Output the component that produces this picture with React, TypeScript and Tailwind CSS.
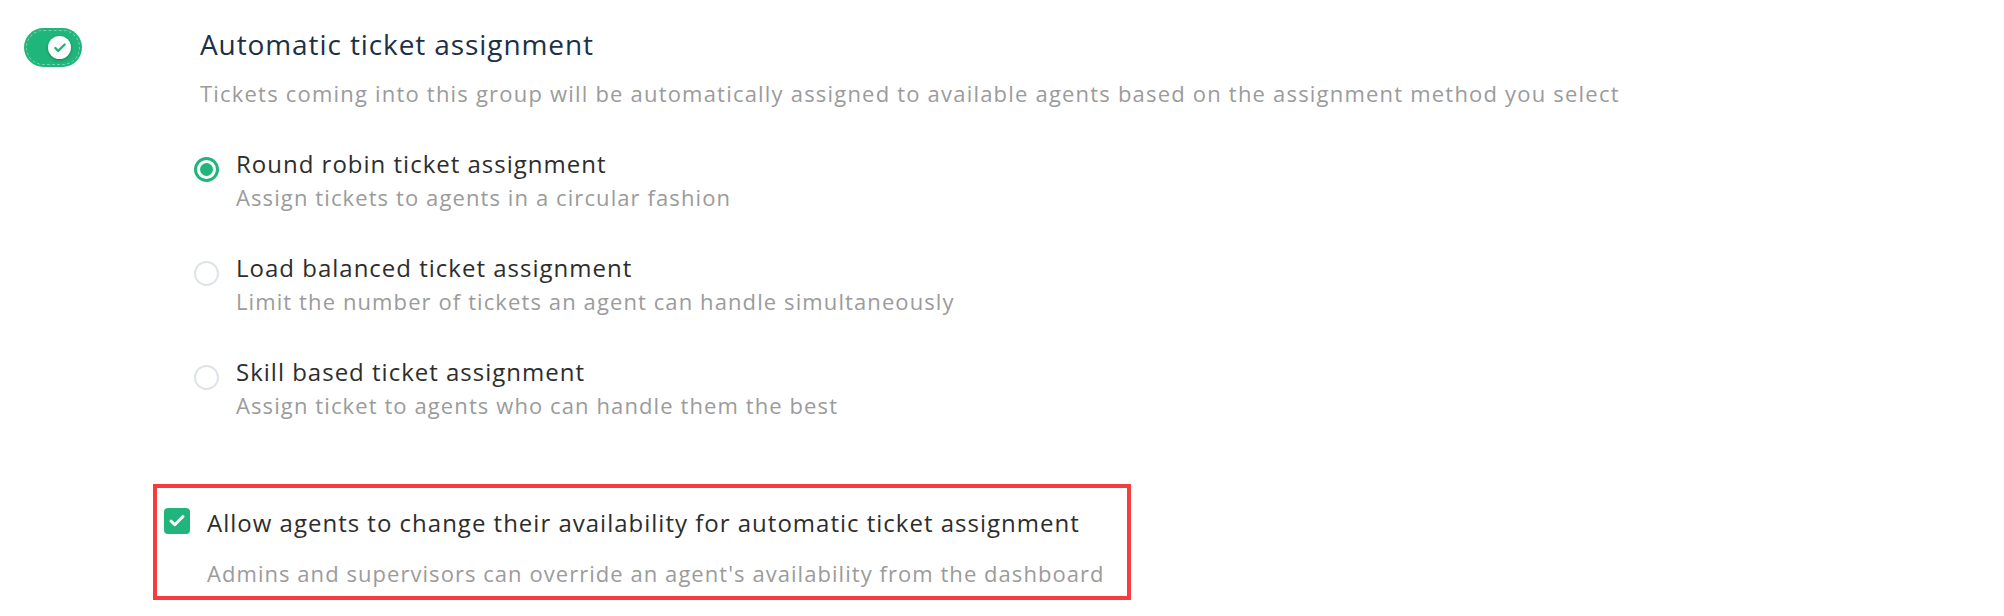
import { Check } from 'lucide-react'

const options = [
  { title: 'Round robin ticket assignment', desc: 'Assign tickets to agents in a circular fashion', checked: true },
  { title: 'Load balanced ticket assignment', desc: 'Limit the number of tickets an agent can handle simultaneously', checked: false },
  { title: 'Skill based ticket assignment', desc: 'Assign ticket to agents who can handle them the best', checked: false },
]

function Toggle() {
  return (
    <div className="w-[58px] h-[39px] rounded-full bg-[#20b57a] p-[2px] flex">
      <div className="flex-1 rounded-full border border-dashed border-white/40 flex items-center justify-end pr-[8px]">
        <div className="w-[23px] h-[23px] rounded-full bg-white shadow-[0_1px_3px_rgba(0,0,0,0.3)] flex items-center justify-center">
          <Check size={14} strokeWidth={4} className="text-[#20b57a]" />
        </div>
      </div>
    </div>
  )
}

function Radio({ checked }: { checked: boolean }) {
  return checked ? (
    <div className="w-[25px] h-[25px] rounded-full border-[3px] border-[#20b57a] flex items-center justify-center shrink-0">
      <div className="w-[13px] h-[13px] rounded-full bg-[#20b57a]" />
    </div>
  ) : (
    <div className="w-[25px] h-[25px] rounded-full border-2 border-[#dde3e8] shrink-0" />
  )
}

export default function App() {
  return (
    <div className="w-[2004px] h-[616px] bg-white flex font-['Open_Sans',sans-serif]">
      {/* toggle */}
      <div className="pl-[24px] pt-[28px]">
        <Toggle />
      </div>

      <div className="ml-[71px] pt-[26px] flex flex-col">
        <h2 className="ml-[47px] text-[28px] leading-[36px] tracking-[0.9px] text-[#1b3146]">Automatic ticket assignment</h2>
        <p className="ml-[47px] mt-[16px] text-[22px] leading-[30px] tracking-[1.2px] text-[#9b9b9b]">
          Tickets coming into this group will be automatically assigned to available agents based on the assignment method you select
        </p>

        <div className="ml-[41px] mt-[41px] flex flex-col gap-[41px]">
          {options.map((o) => (
            <div key={o.title} className="flex items-start gap-[17px]">
              <div className="mt-[8px]">
                <Radio checked={o.checked} />
              </div>
              <div>
                <p className="text-[24px] leading-[30px] tracking-[1px] text-[#2d2d2d]">{o.title}</p>
                <p className="mt-[3px] text-[22px] leading-[30px] tracking-[1.1px] text-[#9b9b9b]">{o.desc}</p>
              </div>
            </div>
          ))}
        </div>

        {/* highlighted option */}
        <div className="mt-[64px] w-[978px] border-4 border-[#f63d3d] pt-[20px] pb-[8px] pl-[7px]">
          <div className="flex items-start gap-[17px]">
            <div className="w-[26px] h-[26px] rounded-[4px] bg-[#20b57a] flex items-center justify-center shrink-0">
              <Check size={18} strokeWidth={4} className="text-white" />
            </div>
            <p className="text-[24px] leading-[30px] tracking-[1px] text-[#2d2d2d]">
              Allow agents to change their availability for automatic ticket assignment
            </p>
          </div>
          <p className="ml-[43px] mt-[20px] text-[22px] leading-[30px] tracking-[1.05px] text-[#9b9b9b]">
            Admins and supervisors can override an agent's availability from the dashboard
          </p>
        </div>
      </div>
    </div>
  )
}
